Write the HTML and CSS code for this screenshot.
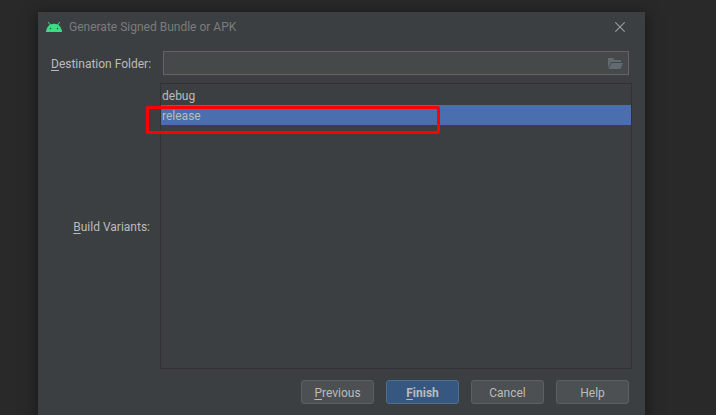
FILE: index.html
```html
<!DOCTYPE html>
<html lang="en">
<head>
<meta charset="utf-8">
<title>Generate Signed Bundle or APK</title>
<link rel="stylesheet" href="styles.css">
</head>
<body>
<main class="dialog">
  <header class="titlebar">
    <svg class="logo" viewBox="0 0 16 10" aria-hidden="true">
      <path d="M2.500.4 4.300 3M13.500.4 11.700 3" stroke="#3ddc84" stroke-width="1" stroke-linecap="round"/>
      <path d="M0 10C.3 5.300 3.500 1.800 8 1.800s7.700 3.500 8 8.200z" fill="#3ddc84"/>
      <circle cx="4.500" cy="6.500" r=".7" fill="#2b3d36"/>
      <circle cx="11.500" cy="6.500" r=".7" fill="#2b3d36"/>
    </svg>
    <h1 class="title">Generate Signed Bundle or APK</h1>
    <button class="close" type="button" aria-label="Close">
      <svg viewBox="0 0 10 10" aria-hidden="true"><path d="M.3.3l9.400 9.400M9.700.3.3 9.700" stroke="#999b9c" stroke-width="1.100"/></svg>
    </button>
  </header>
  <form class="form">
    <label class="label" for="folder"><u>D</u>estination Folder:</label>
    <div class="field">
      <input class="input" id="folder" type="text">
      <button class="browse" type="button" aria-label="Browse">
        <svg viewBox="0 0 15 11" aria-hidden="true"><path d="M0 0h5l1.500 2H13v2H3L0 10z" fill="#616a6e"/><path d="M3.500 5H15l-2.500 6H.5z" fill="#616a6e"/></svg>
      </button>
    </div>
    <label class="label" for="variants"><u>B</u>uild Variants:</label>
    <div class="variants">
      <select class="list" id="variants" size="2">
        <option>debug</option>
        <option selected>release</option>
      </select>
      <div class="highlight"></div>
    </div>
  </form>
  <footer class="actions">
    <button class="button" type="button"><u>P</u>revious</button>
    <button class="button primary" type="button"><u>F</u>inish</button>
    <button class="button" type="button">Cancel</button>
    <button class="button" type="button">Help</button>
  </footer>
</main>
</body>
</html>
```
FILE: styles.css
```css
* {
  box-sizing: border-box;
}

body {
  margin: 0;
  min-height: 100vh;
  display: flex;
  padding: 12px 71px 0 38px;
  background: #292929;
  color: #bbbbbb;
  font: 12px/20px Roboto, "Open Sans", sans-serif;
}

button,
input,
select {
  font: inherit;
  color: inherit;
}

svg {
  display: block;
}

u {
  text-underline-offset: 2px;
  text-decoration-thickness: 1px;
}

.dialog {
  flex: 1;
  display: flex;
  flex-direction: column;
  padding: 0 13px 11px;
  background: #3c3f41;
  box-shadow: 0 2px 14px rgba(0, 0, 0, 0.5);
}

.titlebar {
  display: flex;
  align-items: center;
  height: 29px;
  margin: 0 0 10px -5px;
}

.logo {
  width: 16px;
  height: 10px;
}

.title {
  flex: 1;
  margin: 0 0 0 7px;
  font-size: 12px;
  font-weight: 400;
  color: #7b7c7d;
}

.close {
  padding: 0;
  margin-right: 7px;
  border: 0;
  background: none;
}

.close svg {
  width: 10px;
  height: 10px;
}

.form {
  flex: 1;
  display: grid;
  grid-template-columns: 99px 1fr;
  grid-template-rows: 24px 1fr;
  gap: 8px 10px;
  align-items: center;
}

.label {
  padding-top: 2px;
  text-align: right;
  white-space: nowrap;
}

.field {
  display: flex;
  align-items: center;
  height: 24px;
  margin: 0 3px;
  border: 1px solid #646464;
  background: #45494a;
}

.input {
  flex: 1;
  min-width: 0;
  padding: 0 5px;
  border: 0;
  outline: 0;
  background: none;
}

.browse {
  padding: 0;
  margin-right: 5px;
  border: 0;
  background: none;
}

.browse svg {
  width: 15px;
  height: 11px;
}

.variants {
  position: relative;
  align-self: stretch;
  display: flex;
}

.list {
  flex: 1;
  padding: 1px 0 0;
  border: 1px solid #323232;
  border-radius: 0;
  outline: 0;
  background: #3c3f41;
  overflow: hidden;
}

.list option {
  height: 20px;
  min-height: 20px;
  padding: 4px 1px 0;
  color: #bbbbbb;
}

.list option:checked {
  color: #bbbbbb;
  -webkit-text-fill-color: #bbbbbb;
  background: #4b6eaf linear-gradient(#4b6eaf, #4b6eaf);
}

.highlight {
  position: absolute;
  top: 23px;
  left: -14px;
  width: 294px;
  height: 28px;
  border: 3px solid #ff0000;
  border-radius: 2px;
  pointer-events: none;
}

.actions {
  display: flex;
  justify-content: flex-end;
  gap: 12px;
  margin: 11px 3px 0;
}

.button {
  width: 73px;
  height: 24px;
  padding: 2px 0 0;
  border: 1px solid #5e6060;
  border-radius: 3px;
  background: #4c5052;
  line-height: 20px;
}

.primary {
  border-color: #4c708c;
  background: #365880;
  font-weight: 700;
}
```
